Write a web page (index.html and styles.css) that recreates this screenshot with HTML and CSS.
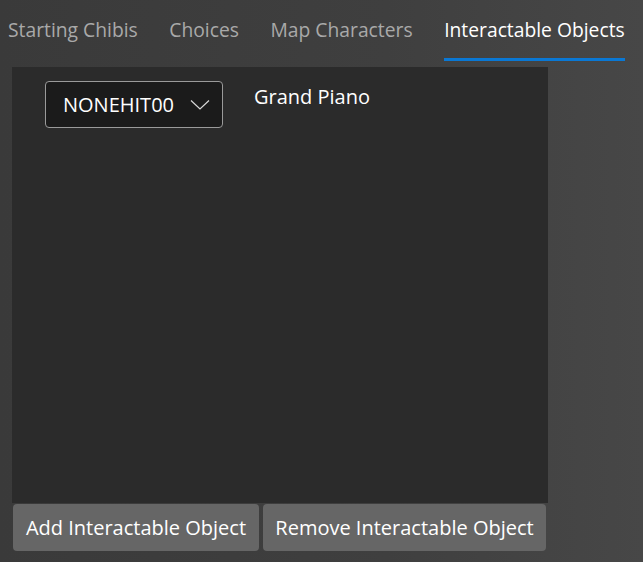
FILE: index.html
```html
<!DOCTYPE html>
<html>
<head>
<meta charset="utf-8">
<link rel="stylesheet" href="styles.css">
</head>
<body>
<div class="app">
  <nav class="tabs">
    <div class="tab">Starting Chibis</div>
    <div class="tab">Choices</div>
    <div class="tab">Map Characters</div>
    <div class="tab active">Interactable Objects</div>
  </nav>
  <section class="panel">
    <div class="row">
      <div class="select">
        <span class="select-text">NONEHIT00</span>
        <svg class="chev" width="20" height="12" viewBox="0 0 20 12"><path d="M1 1.5 L10 10 L19 1.5" fill="none" stroke="#d8d8d8" stroke-width="1.2"/></svg>
      </div>
      <div class="name">Grand Piano</div>
    </div>
  </section>
  <div class="buttons">
    <button class="btn btn-add">Add Interactable Object</button>
    <button class="btn btn-remove">Remove Interactable Object</button>
  </div>
</div>
</body>
</html>
```
FILE: styles.css
```css
html, body {
  margin: 0;
  padding: 0;
  height: 100%;
}
body {
  background: linear-gradient(90deg, #3a3a3a 0%, #3f3f3f 60%, #474747 100%);
  font-family: "Open Sans", "Noto Sans", sans-serif;
  color: #fff;
  overflow: hidden;
}
.app {
  display: flex;
  flex-direction: column;
  width: 643px;
  height: 562px;
}
.tabs {
  display: flex;
  gap: 31.5px;
  padding: 0 0 0 8px;
  height: 67px;
  box-sizing: border-box;
}
.tab {
  font-size: 19.3px;
  color: #a9a9a9;
  padding-top: 16px;
  height: 61px;
  box-sizing: border-box;
  white-space: nowrap;
}
.tab.active {
  color: #ffffff;
  border-bottom: 3px solid #0a78d4;
}
.panel {
  margin-left: 12px;
  width: 536px;
  height: 436px;
  background: #2b2b2b;
  box-sizing: border-box;
  padding: 14px 0 0 33px;
}
.row {
  display: flex;
  align-items: flex-start;
  gap: 31px;
}
.select {
  width: 178px;
  height: 47px;
  box-sizing: border-box;
  border: 1.5px solid #9a9a9a;
  border-radius: 4px;
  background: #1b1b1b;
  display: flex;
  align-items: center;
  padding: 0 12px 0 17px;
  justify-content: space-between;
}
.select-text {
  font-size: 20px;
  color: #fff;
}
.name {
  font-size: 20px;
  color: #fff;
  padding-top: 2px;
}
.buttons {
  display: flex;
  gap: 4px;
  margin-left: 13px;
  margin-top: 1px;
}
.btn {
  font-family: "Open Sans", "Noto Sans", sans-serif;
  font-size: 20px;
  color: #fff;
  background: #666666;
  border: none;
  border-radius: 4px;
  height: 47px;
  padding: 0;
}
.btn-add { width: 246px; }
.btn-remove { width: 283px; }
```
